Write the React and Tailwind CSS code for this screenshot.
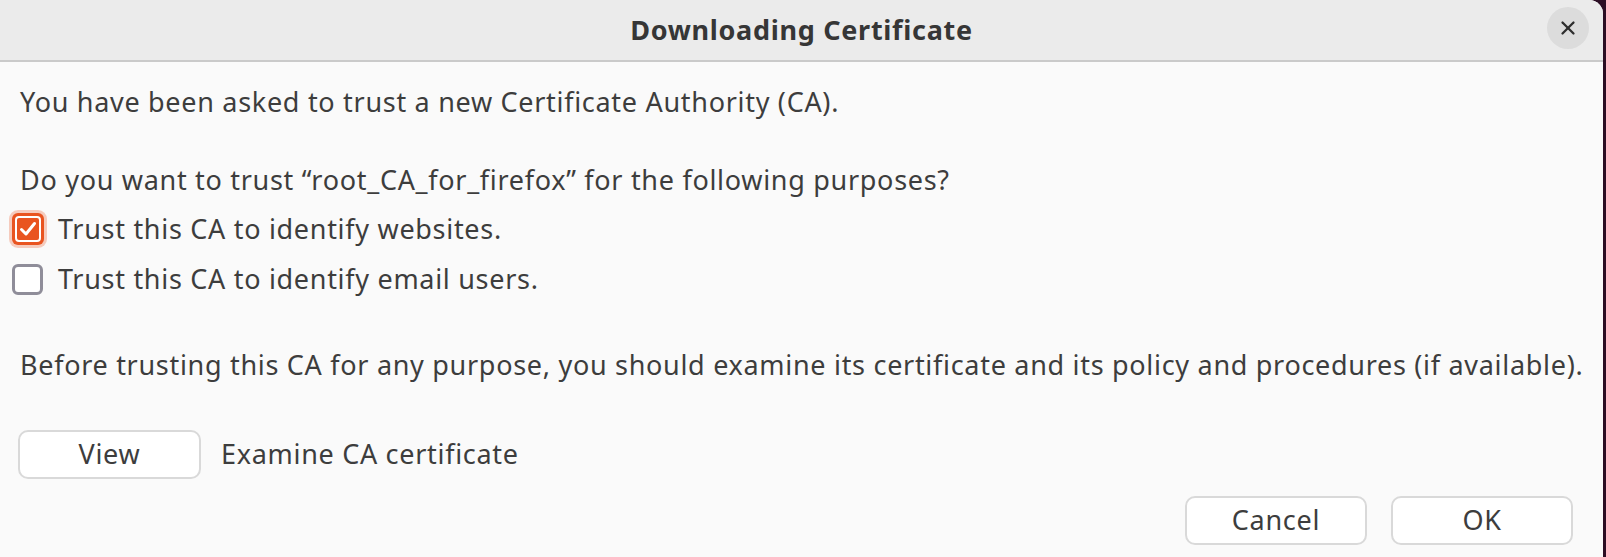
import React, { useState } from 'react';
import { X } from 'lucide-react';

const font = { fontFamily: '"Noto Sans", "Open Sans", sans-serif' };

const Checkbox = ({ checked, onChange }) => {
  if (checked) {
    return (
      <button
        onClick={onChange}
        className="w-[32px] h-[32px] rounded-[6px] bg-[#e95420] p-[3px] shadow-[0_0_0_3px_rgba(233,84,32,0.28)]"
      >
        <div className="w-full h-full rounded-[4px] border-2 border-white flex items-center justify-center">
          <svg width="20" height="20" viewBox="0 0 20 20" fill="none">
            <path d="M3.5 10.5 L8 15 L16.5 4.5" stroke="white" strokeWidth="3" strokeLinecap="round" strokeLinejoin="round" />
          </svg>
        </div>
      </button>
    );
  }
  return (
    <button
      onClick={onChange}
      className="w-[31px] h-[31px] rounded-[6px] bg-white border-[3px] border-[#8f8d99]"
    />
  );
};

const Button = ({ children, className }) => (
  <button className={`h-[49px] rounded-[10px] bg-white border-2 border-[#d9d9d9] text-[27px] tracking-[0.7px] text-[#3d3d3d] ${className}`}>
    {children}
  </button>
);

const App = () => {
  const [websites, setWebsites] = useState(true);
  const [email, setEmail] = useState(false);

  return (
    <div className="w-[1606px] h-[557px] bg-[#2c0e24] flex overflow-hidden" style={font}>
      <div className="w-[1603px] h-full bg-[#fafafa] rounded-tr-[14px] flex flex-col overflow-hidden">
        <header className="h-[62px] shrink-0 bg-[#ebebeb] border-b-2 border-[#cacaca] flex items-center relative">
          <h1 className="w-full text-center text-[27px] tracking-[0.7px] font-bold text-[#363636]">Downloading Certificate</h1>
          <button className="absolute right-[14px] top-[7px] w-[42px] h-[42px] rounded-full bg-[#dcdcdc] flex items-center justify-center text-[#2e2e2e]">
            <X size={22} strokeWidth={2.5} />
          </button>
        </header>

        <div className="flex flex-col pl-[20px] pr-[30px] text-[27px] tracking-[0.7px] text-[#3d3d3d]">
          <p className="mt-[25px] leading-[30px]">You have been asked to trust a new Certificate Authority (CA).</p>
          <p className="mt-[48px] leading-[30px]">Do you want to trust “root_CA_for_firefox” for the following purposes?</p>

          <div className="mt-[9px] -ml-[8px] flex flex-col">
            <label className="h-[50px] flex items-center gap-[14px]">
              <Checkbox checked={websites} onChange={() => setWebsites(!websites)} />
              <span>Trust this CA to identify websites.</span>
            </label>
            <label className="h-[50px] flex items-center gap-[15px]">
              <Checkbox checked={email} onChange={() => setEmail(!email)} />
              <span>Trust this CA to identify email users.</span>
            </label>
          </div>

          <p className="mt-[46px] leading-[30px] whitespace-nowrap">
            Before trusting this CA for any purpose, you should examine its certificate and its policy and procedures (if available).
          </p>

          <div className="mt-[50px] -ml-[2px] flex items-center gap-[20px]">
            <Button className="w-[183px] h-[48px]">View</Button>
            <span>Examine CA certificate</span>
          </div>

          <div className="mt-[17px] flex justify-end gap-[24px]">
            <Button className="w-[182px]">Cancel</Button>
            <Button className="w-[182px]">OK</Button>
          </div>
        </div>
      </div>
    </div>
  );
};

export default App;
